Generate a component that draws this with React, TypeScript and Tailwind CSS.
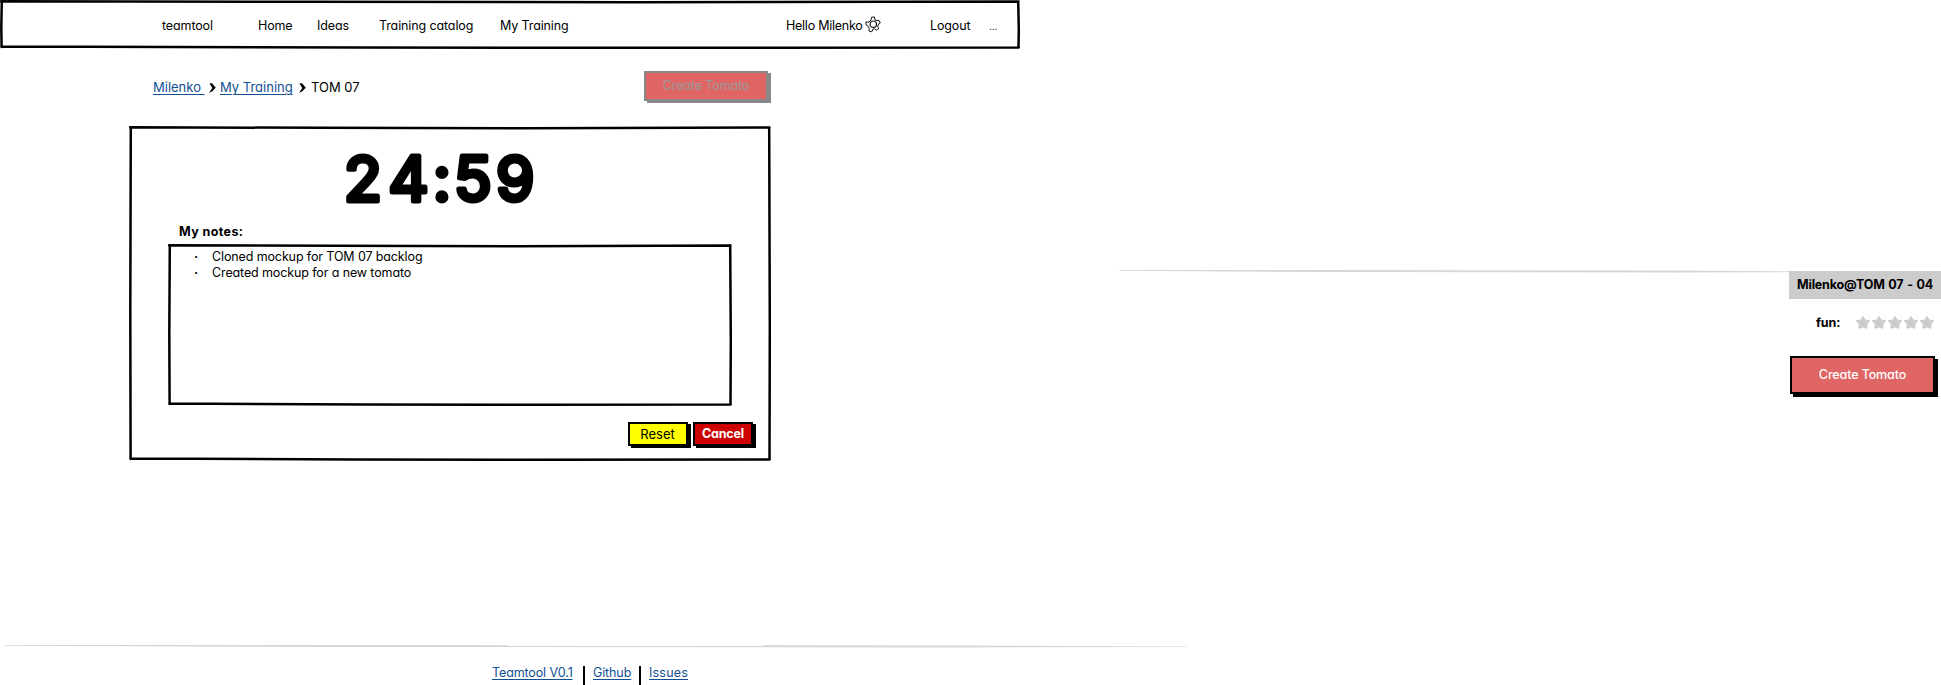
import React from "react";

type FrameProps = { w: number; h: number };

/* Hand-drawn outline: four slightly bowed strokes. */
function SketchFrame({ w, h }: FrameProps) {
  const d = [
    `M1 1.3 L${w * 0.3} 1.8 L${w * 0.62} 2.2 L${w - 1.5} 1.6`,
    `M${w - 1.8} 1.5 L${w - 1.2} ${h * 0.6} L${w - 1.5} ${h - 1.5}`,
    `M1.3 ${h - 2.4} L${w * 0.35} ${h - 1.6} L${w * 0.6} ${h - 1.2} L${w - 1.2} ${h - 1.6}`,
    `M1.8 1.2 L1.3 ${h * 0.55} L1.6 ${h - 2}`,
  ].join(" ");
  return (
    <svg aria-hidden="true" className="pointer-events-none absolute inset-0" width={w} height={h}>
      <path d={d} fill="none" stroke="#000" strokeWidth="2.5" strokeLinecap="round" />
    </svg>
  );
}

/* Horizontal pencil line that thins out at both ends. */
function SketchRule({ w }: { w: number }) {
  return (
    <svg aria-hidden="true" className="relative block" width={w} height={3}>
      <path d={`M0 0 L${w * 0.5} 0.2 L${w * 0.8} 0.5 L${w} 1.6 L${w} 2.1 L${w * 0.8} 2.4 L${w * 0.3} 2 L0 0.8 Z`} fill="#d6d6d6" />
    </svg>
  );
}

/* Five-toothed cog with a ring inside. */
function Gear() {
  return (
    <svg width="16" height="17" viewBox="0 0 16 17" fill="none" stroke="#111" strokeWidth="1" strokeLinejoin="round">
      <path d="M6 4 6.6 1.2 9.4 1 10 3.8 12 4.6 14 4.3 15.3 7 13.2 8.6 12.8 10.6 13.6 12.8 11.4 14.2 9.4 12.8 8 13 6.8 15.8 4 15 4.2 12.2 3.4 10.4 1.2 9 0.9 6 3.8 6 Z" />
      <circle cx="8.3" cy="8.2" r="3.2" strokeWidth="1.2" />
    </svg>
  );
}

function Chevron({ className }: { className: string }) {
  return (
    <svg className={className} width="7" height="10" viewBox="0 0 7 10">
      <path d="M0.4 0.3 3 0.3 6.8 4.8 3 8.4 0 9.8 3.3 5Z" fill="#000" />
    </svg>
  );
}

function Star() {
  return (
    <svg width="14" height="13" viewBox="0 0 14 13">
      <path d="M7 .8 9 4.1 13.3 4.8 10.4 7.9 11 12 7 10.6 3 12 3.6 7.9.7 4.8 5 4.1Z" fill="#ccc" stroke="#ccc" strokeWidth="1.4" strokeLinejoin="round" />
    </svg>
  );
}

const link = "text-[#134f93] underline decoration-1 underline-offset-2 whitespace-pre";

export default function App() {
  return (
    <div className="h-[685px] w-[1941px] overflow-hidden bg-white font-['Inter',sans-serif] text-[12.5px] leading-4 tracking-[-0.12px] text-black [font-feature-settings:'cv11']">
      <div className="flex h-[645px]">
        <div className="w-[1020px]">
          <nav className="relative flex h-[49px] items-start whitespace-nowrap pt-[18px]">
            <SketchFrame w={1020} h={49} />
            <span className="ml-[162px] w-24">teamtool</span>
            <span className="w-[59px]">Home</span>
            <span className="w-[62px]">Ideas</span>
            <span className="w-[121px]">Training catalog</span>
            <span className="w-[286px]">My Training</span>
            <span className="w-[79px] tracking-[-0.25px]">Hello Milenko</span>
            <span className="-mt-0.5 w-[65px]"><Gear /></span>
            <span className="w-[59px]">Logout</span>
            <span className="text-[10px]">...</span>
          </nav>

          <div className="ml-[129px] w-[642px]">
            <div className="flex h-[77px] items-start pt-[22px]">
              <div className="ml-6 mt-2 flex w-[491px] items-start whitespace-nowrap text-[13px] tracking-normal">
                <a href="#" className={`w-14 ${link}`}>{"Milenko "}</a>
                <Chevron className="mt-1 mr-1" />
                <a href="#" className={`w-[79px] ${link}`}>My Training</a>
                <Chevron className="mt-1 mr-[5px]" />
                <span>TOM 07</span>
              </div>
              <button disabled className="h-[30px] w-[124px] border-2 border-[#888] bg-[#e06666] text-[#999] shadow-[3px_2px_0_#888]">
                Create Tomato
              </button>
            </div>

            <main className="relative h-[335px] w-[642px]">
              <SketchFrame w={642} h={335} />
              <div className="flex h-[98px] items-start pl-[205px] pt-[12px]">
                <svg width="220" height="84" viewBox="-8 -8 220 84" className="overflow-visible font-['Inter',sans-serif]">
                  <text
                    x="2 46.5 91 112 154"
                    y="54.5"
                    fontSize="62"
                    fontWeight="400"
                    letterSpacing="0"
                    stroke="#000"
                    strokeWidth="5"
                    strokeLinejoin="round"
                  >
                    24:59
                  </text>
                </svg>
              </div>
              <h2 className="h-5 pl-[50px] font-bold tracking-[0.4px]">My notes:</h2>
              <div className="relative ml-[39px] h-[162px] w-[564px] pt-[5px]">
                <SketchFrame w={564} h={162} />
                <ul>
                  <li className="flex"><span className="ml-[26px] w-[18px] font-bold">·</span>Cloned mockup for TOM 07 backlog</li>
                  <li className="flex"><span className="ml-[26px] w-[18px] font-bold">·</span>Created mockup for a new tomato</li>
                </ul>
              </div>
              <div className="mt-4 flex gap-[5px] pl-[499px]">
                <button className="h-6 w-[60px] border-2 border-black bg-[#ffff00] pr-px text-[13px] leading-[18px] tracking-normal shadow-[3px_2px_0_#000]">Reset</button>
                <button className="h-6 w-[60px] border-2 border-black bg-[#cc0000] font-bold leading-[18px] tracking-[-0.2px] text-white shadow-[3px_2px_0_#000]">Cancel</button>
              </div>
            </main>
          </div>
        </div>

        <aside className="ml-[99px] flex w-[822px] flex-col pt-[270px]">
          <div className="h-px"><SketchRule w={695} /></div>
          <div className="relative flex w-[152px] flex-col self-end whitespace-nowrap">
            <div className="h-7 bg-[#ccc] pl-2 pt-[6px] font-bold tracking-[-0.2px] [word-spacing:1px]">Milenko@TOM 07 - 04</div>
            <div className="flex h-[57px] pl-[27px] pt-[16px]">
              <span className="w-10 font-bold">fun:</span>
              <span className="flex gap-[2px] pt-px"><Star /><Star /><Star /><Star /><Star /></span>
            </div>
            <button className="ml-px h-[38px] w-[145px] border-2 border-black bg-[#e06666] font-medium text-white shadow-[3px_3px_0_#000]">Create Tomato</button>
          </div>
        </aside>
      </div>

      <footer>
        <div className="ml-[5px]"><SketchRule w={1182} /></div>
        <div className="flex h-[37px] whitespace-nowrap pl-[492px] pt-[17px]">
          <a href="#" className={`w-[91px] ${link}`}>Teamtool V0.1</a>
          <span className="mr-2 mt-px h-5 w-[2px] bg-black" />
          <a href="#" className={`w-[46px] ${link}`}>Github</a>
          <span className="mr-2 mt-px h-5 w-[2px] bg-black" />
          <a href="#" className={`tracking-[0.2px] ${link}`}>Issues</a>
        </div>
      </footer>
    </div>
  );
}
